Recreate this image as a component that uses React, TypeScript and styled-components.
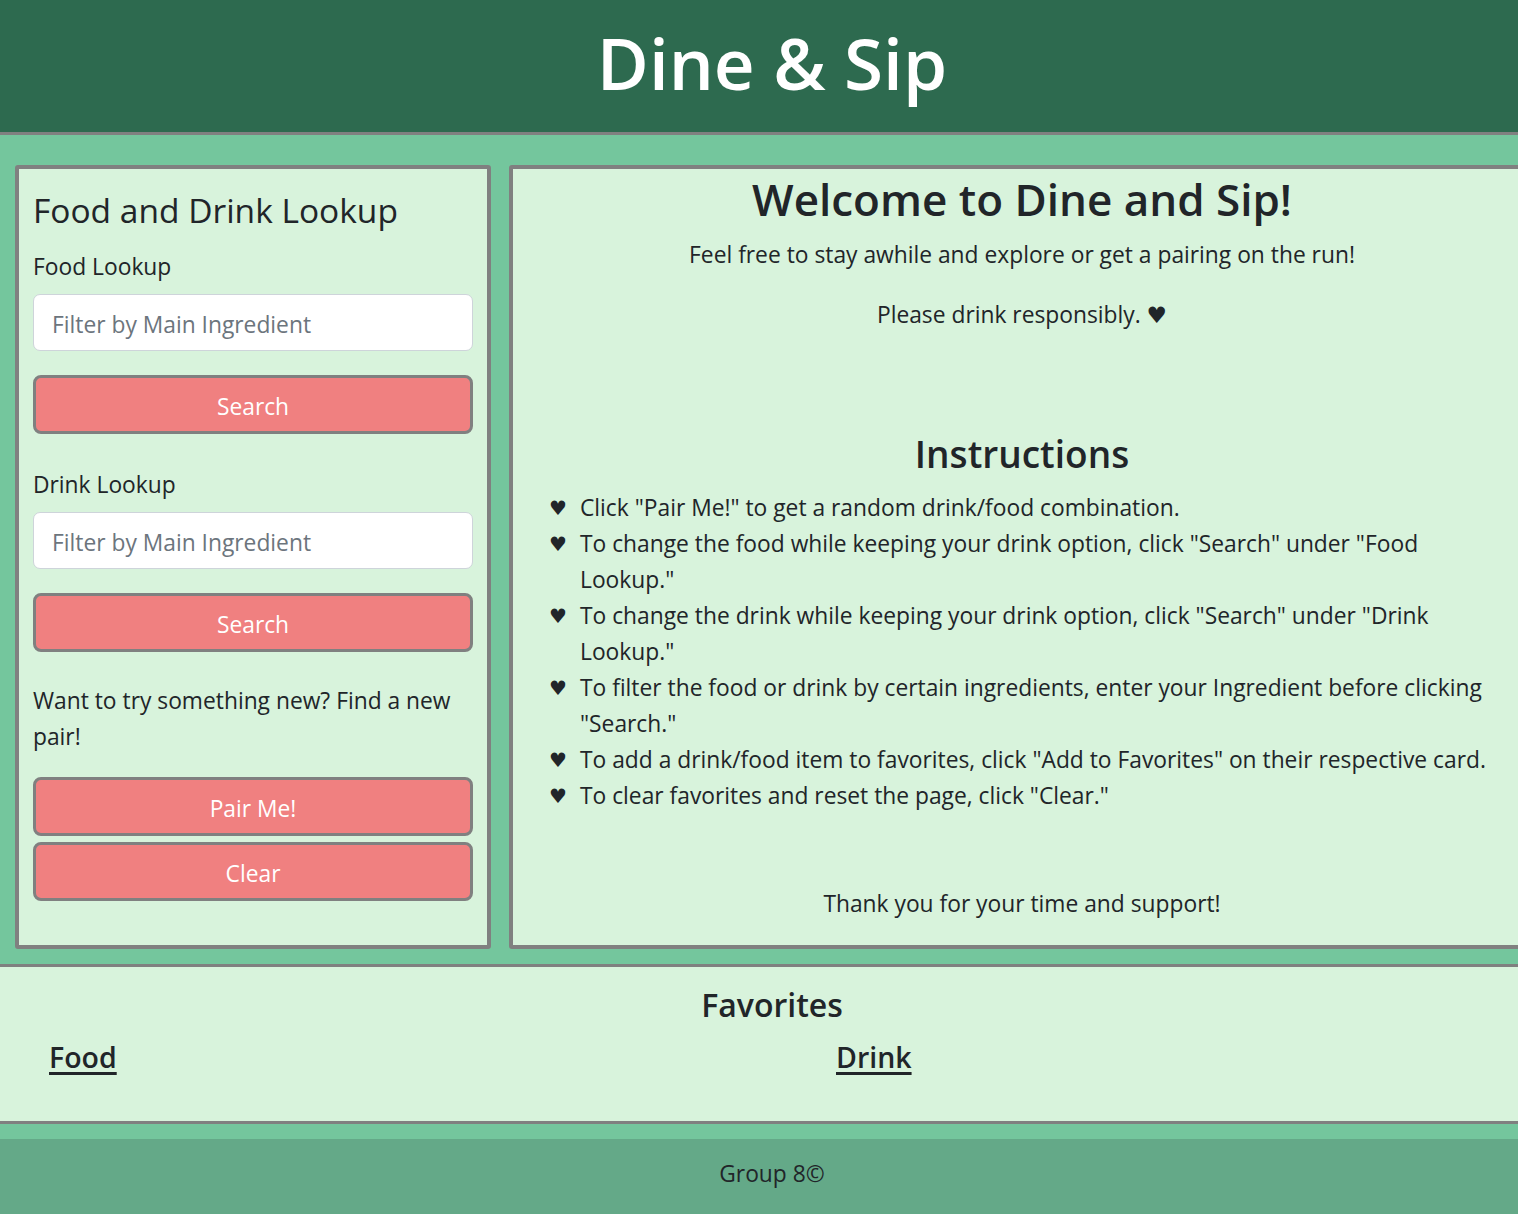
import styled, { createGlobalStyle } from 'styled-components';

const GlobalStyle = createGlobalStyle`
  html, body {
    margin: 0;
    padding: 0;
    overflow-x: hidden;
  }

  body {
    font-family: 'Open Sans', 'Noto Sans', 'DejaVu Sans', sans-serif;
    color: #212529;
    background: #74c69d;
  }

  * {
    box-sizing: border-box;
  }
`;

const Page = styled.div`
  width: 1544px;
  background: #74c69d;
`;

const Header = styled.header`
  height: 135px;
  display: flex;
  align-items: center;
  justify-content: center;
  background: #2d6a4f;
  border-bottom: 3px solid #808080;
`;

const Title = styled.h1`
  margin: 0 0 6px;
  font-size: 71px;
  font-weight: 600;
  line-height: 1.2;
  color: #fff;
`;

const Main = styled.main`
  display: grid;
  grid-template-columns: 476px 1026px;
  column-gap: 18px;
  padding: 30px 0 15px 15px;
`;

const Panel = styled.section`
  background: #d8f3dc;
  border: 4px solid #808080;
  border-radius: 3px;
`;

const Sidebar = styled(Panel)`
  display: flex;
  flex-direction: column;
  padding: 17px 14px 44px;
`;

const SidebarTitle = styled.h2`
  margin: 0 0 14px;
  font-size: 33.5px;
  font-weight: 400;
  line-height: 48px;
`;

const Label = styled.p<{ $gap?: number }>`
  margin: ${({ $gap }) => $gap ?? 0}px 0 10px;
  padding-top: 1px;
  height: 36px;
  font-size: 22.8px;
  line-height: 36px;
`;

const Input = styled.input`
  display: block;
  width: 100%;
  height: 57px;
  padding: 3px 18px 0;
  font-family: inherit;
  font-size: 22.8px;
  color: #212529;
  background: #fff;
  border: 1px solid #ced4da;
  border-radius: 7px;

  &::placeholder {
    color: #6c757d;
  }
`;

const Button = styled.button<{ $gap: number }>`
  display: block;
  width: 100%;
  height: 59px;
  margin-top: ${({ $gap }) => $gap}px;
  padding: 3px 0 0;
  font-family: inherit;
  font-size: 22.8px;
  color: #fff;
  background: #f08080;
  border: 3px solid #808080;
  border-radius: 8px;
  cursor: pointer;
`;

const Prompt = styled.p`
  margin: 31px 0 0;
  font-size: 22.8px;
  line-height: 36px;
`;

const Welcome = styled(Panel)`
  padding: 0 0 23px;
  text-align: center;
`;

const Heading = styled.h1`
  margin: 0 0 8px;
  font-size: 44px;
  font-weight: 600;
  line-height: 60px;
`;

const Text = styled.p<{ $gap?: number }>`
  margin: ${({ $gap }) => $gap ?? 0}px 0 0;
  font-size: 22.8px;
  line-height: 36px;
`;

const SubHeading = styled.h2`
  margin: 97px 0 12px;
  font-size: 37px;
  font-weight: 600;
  line-height: 48px;
`;

const Steps = styled.ul`
  list-style: none;
  margin: 0;
  padding: 0 34px 0 36px;
  text-align: left;
`;

const Step = styled.li`
  display: grid;
  grid-template-columns: 31px 1fr;
  font-size: 22.8px;
  line-height: 36px;

  &::before {
    content: '♥';
    font-family: 'DejaVu Sans', sans-serif;
    font-size: 20px;
  }
`;

const Favorites = styled.section`
  padding: 17px 49px 46px;
  background: #d8f3dc;
  border-top: 3px solid #808080;
  border-bottom: 3px solid #808080;
`;

const FavTitle = styled.h3`
  margin: 0 0 13px;
  font-size: 32px;
  font-weight: 600;
  line-height: 42px;
  text-align: center;
`;

const FavColumns = styled.div`
  display: grid;
  grid-template-columns: 787px 1fr;
`;

const FavHeading = styled.h4`
  margin: 0;
  font-size: 28.5px;
  font-weight: 600;
  line-height: 36px;
  text-decoration: underline;
  text-decoration-thickness: 3px;
  text-underline-offset: 4px;
`;

const Footer = styled.footer`
  margin-top: 15px;
  padding: 20px 0 26px;
  background: #64a988;
  font-size: 22.8px;
  line-height: 30px;
  text-align: center;
`;

const steps = [
  'Click "Pair Me!" to get a random drink/food combination.',
  'To change the food while keeping your drink option, click "Search" under "Food Lookup."',
  'To change the drink while keeping your drink option, click "Search" under "Drink Lookup."',
  'To filter the food or drink by certain ingredients, enter your Ingredient before clicking "Search."',
  'To add a drink/food item to favorites, click "Add to Favorites" on their respective card.',
  'To clear favorites and reset the page, click "Clear."',
];

function App() {
  return (
    <Page>
      <GlobalStyle />
      <Header>
        <Title>Dine &amp; Sip</Title>
      </Header>

      <Main>
        <Sidebar>
          <SidebarTitle>Food and Drink Lookup</SidebarTitle>
          <Label>Food Lookup</Label>
          <Input placeholder="Filter by Main Ingredient" />
          <Button $gap={24}>Search</Button>

          <Label $gap={32}>Drink Lookup</Label>
          <Input placeholder="Filter by Main Ingredient" />
          <Button $gap={24}>Search</Button>

          <Prompt>Want to try something new? Find a new pair!</Prompt>
          <Button $gap={22}>Pair Me!</Button>
          <Button $gap={6}>Clear</Button>
        </Sidebar>

        <Welcome>
          <Heading>Welcome to Dine and Sip!</Heading>
          <Text>Feel free to stay awhile and explore or get a pairing on the run!</Text>
          <Text $gap={24}>Please drink responsibly. ♥</Text>

          <SubHeading>Instructions</SubHeading>
          <Steps>
            {steps.map((step) => (
              <Step key={step}>{step}</Step>
            ))}
          </Steps>

          <Text $gap={72}>Thank you for your time and support!</Text>
        </Welcome>
      </Main>

      <Favorites>
        <FavTitle>Favorites</FavTitle>
        <FavColumns>
          <FavHeading>Food</FavHeading>
          <FavHeading>Drink</FavHeading>
        </FavColumns>
      </Favorites>

      <Footer>Group 8©</Footer>
    </Page>
  );
}

export default App;
